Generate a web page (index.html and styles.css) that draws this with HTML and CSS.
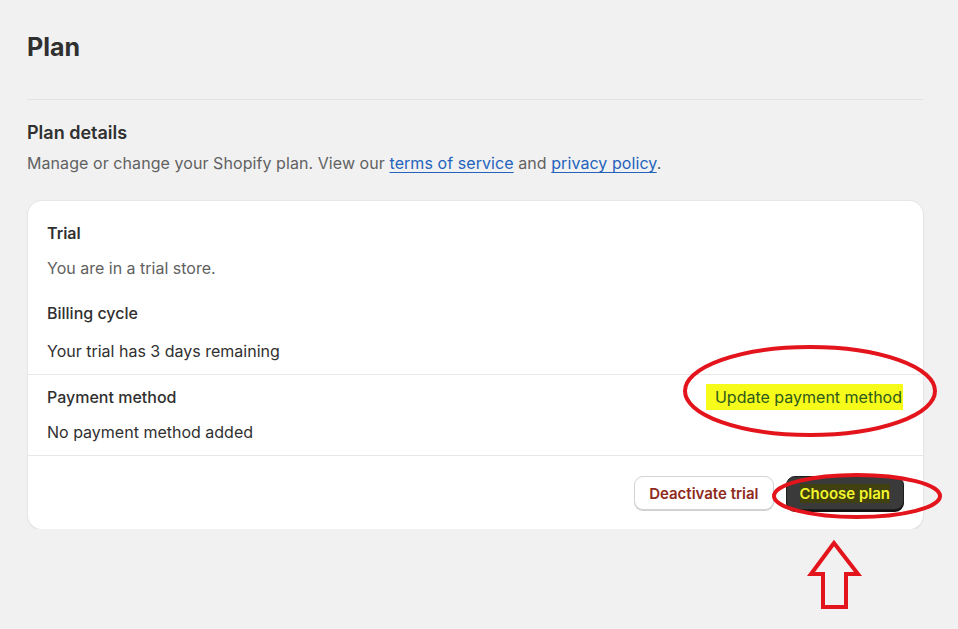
FILE: index.html
```html
<!DOCTYPE html>
<html>
  <head>
    <link rel="stylesheet" href="styles.css">
  </head>
  <body>
    <div class="page">
      <h1 class="title">Plan</h1>
      <hr class="rule">
      <h2 class="subtitle">Plan details</h2>
      <p class="intro">Manage or change your Shopify plan. View our <a href="#">terms of service</a> and <a href="#">privacy policy</a>.</p>

      <div class="card">
        <div class="section">
          <div class="label strong">Trial</div>
          <div class="text muted">You are in a trial store.</div>
          <div class="label gap">Billing cycle</div>
          <div class="text wide">Your trial has 3 days remaining</div>
        </div>
        <div class="section pay">
          <div>
            <div class="label">Payment method</div>
            <div class="text">No payment method added</div>
          </div>
          <a href="#" class="update"><mark>Update payment method</mark></a>
        </div>
        <div class="section actions">
          <button class="btn ghost">Deactivate trial</button>
          <button class="btn dark"><mark>Choose plan</mark></button>
        </div>
      </div>
    </div>

    <svg class="marks" width="958" height="629" viewBox="0 0 958 629">
      <ellipse cx="810" cy="391" rx="125" ry="44" />
      <ellipse cx="857" cy="496" rx="83" ry="21" />
      <path d="M834 543 L811 574 L823 574 L823 607 L846 607 L846 574 L858 574 Z" />
    </svg>
  </body>
</html>
```

FILE: styles.css
```css
html, body {
  margin: 0;
  padding: 0;
  background: #f1f1f1;
  font-family: Inter, "Noto Sans", sans-serif;
  color: #303030;
}
.page {
  width: 896px;
  padding: 32px 0 0 27px;
}
.title {
  margin: 0;
  font-size: 25px;
  line-height: 30px;
  font-weight: 700;
}
.rule {
  border: 0;
  border-top: 1px solid #e3e3e3;
  margin: 37px 0 0;
}
.subtitle {
  margin: 22px 0 0;
  font-size: 18px;
  line-height: 22px;
  font-weight: 600;
}
.intro {
  margin: 7px 0 0;
  font-size: 16px;
  line-height: 24px;
  letter-spacing: 0.07px;
  color: #616161;
}
.intro a {
  color: #2463bc;
  text-decoration: underline;
  text-underline-offset: 3px;
}

.card {
  margin-top: 26px;
  margin-left: 1px;
  background: #fff;
  border-radius: 14px;
  box-shadow: 0 0 0 1px #e6e6e6, 0 1px 2px rgba(0, 0, 0, 0.12);
  overflow: hidden;
}
.section {
  padding: 22px 19px 13px;
  border-bottom: 1px solid #e8e8e8;
}
.label {
  font-size: 16px;
  line-height: 20px;
  font-weight: 500;
}
.label.strong {
  font-weight: 600;
}
.label.gap {
  margin-top: 25px;
}
.text {
  margin-top: 15px;
  font-size: 16px;
  line-height: 20px;
}
.text.wide {
  margin-top: 18px;
}
.muted {
  color: #616161;
}
.pay {
  padding-top: 12px;
  display: flex;
  justify-content: space-between;
  align-items: flex-start;
}
.update {
  font-size: 16px;
  line-height: 20px;
  text-decoration: none;
  margin-right: 1px;
}
.update mark {
  background: #f6fb1a;
  color: #2d5a1c;
  padding: 3px 1px 3px 9px;
}
.actions {
  border-bottom: 0;
  padding: 20px 19px 19px;
  display: flex;
  justify-content: flex-end;
  gap: 12px;
}
.btn {
  font-family: inherit;
  font-size: 15px;
  font-weight: 600;
  height: 34px;
  border-radius: 9px;
  padding: 0 14px;
  cursor: pointer;
}
.ghost {
  background: #fff;
  color: #8e2a1c;
  border: 1px solid #d4d4d4;
  box-shadow: 0 1px 0 #cfcfcf;
}
.dark {
  background: #3a3a3a;
  border: 1px solid #1e1e1e;
  box-shadow: 0 2px 0 #111;
  padding: 0 13px;
}
.dark mark {
  background: #404010;
  color: #f2f52a;
}

.marks {
  position: absolute;
  left: 0;
  top: 0;
  pointer-events: none;
}
.marks ellipse, .marks path {
  fill: none;
  stroke: #e3141b;
  stroke-width: 4;
}
```
